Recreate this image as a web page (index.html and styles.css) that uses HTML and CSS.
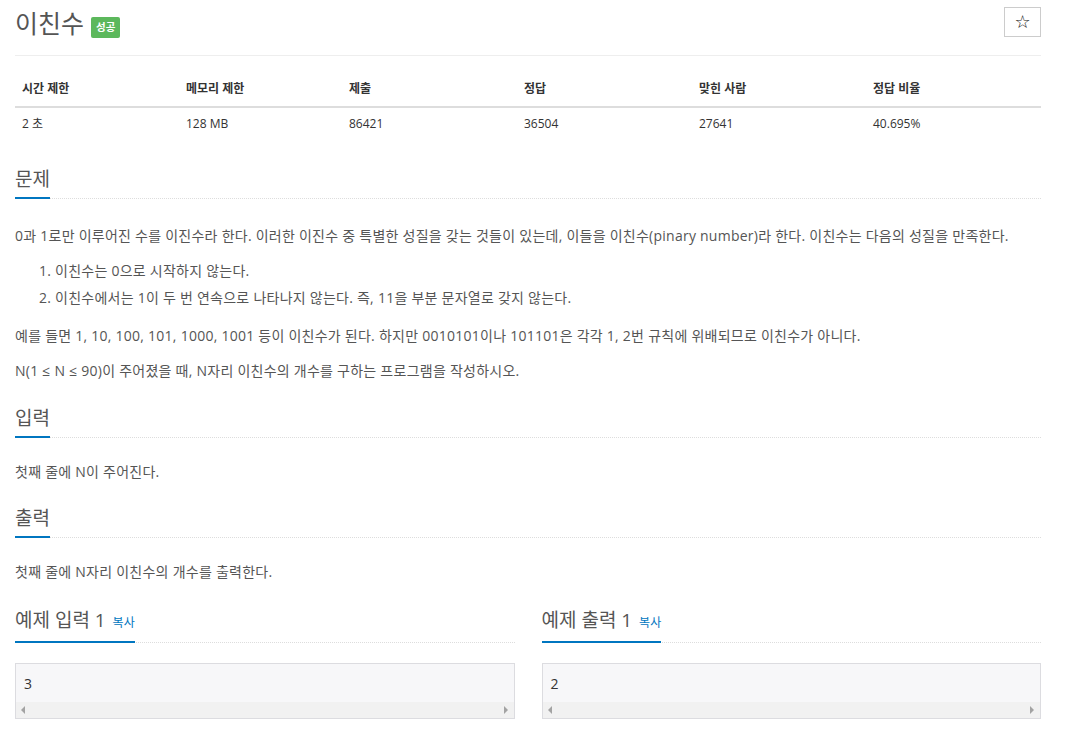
FILE: index.html
```html
<!DOCTYPE html>
<html lang="ko">
<head>
<meta charset="utf-8">
<title>이친수</title>
<link rel="stylesheet" href="styles.css">
</head>
<body>
<div class="page">
  <div class="page-header">
    <div class="title-group">
      <h1 class="title">이친수</h1>
      <span class="badge">성공</span>
    </div>
    <button class="star-btn">☆</button>
  </div>

  <table class="info">
    <colgroup>
      <col class="c1"><col class="c2"><col class="c3"><col class="c4"><col class="c5"><col class="c6">
    </colgroup>
    <thead>
      <tr>
        <th>시간 제한</th>
        <th>메모리 제한</th>
        <th>제출</th>
        <th>정답</th>
        <th>맞힌 사람</th>
        <th>정답 비율</th>
      </tr>
    </thead>
    <tbody>
      <tr>
        <td>2 초</td>
        <td>128 MB</td>
        <td>86421</td>
        <td>36504</td>
        <td>27641</td>
        <td>40.695%</td>
      </tr>
    </tbody>
  </table>

  <section class="sec sec-first">
    <div class="sec-head"><h2>문제</h2></div>
    <div class="sec-body">
      <p>0과 1로만 이루어진 수를 이진수라 한다. 이러한 이진수 중 특별한 성질을 갖는 것들이 있는데, 이들을 이친수(pinary number)라 한다. 이친수는 다음의 성질을 만족한다.</p>
      <ol>
        <li>이친수는 0으로 시작하지 않는다.</li>
        <li>이친수에서는 1이 두 번 연속으로 나타나지 않는다. 즉, 11을 부분 문자열로 갖지 않는다.</li>
      </ol>
      <p>예를 들면 1, 10, 100, 101, 1000, 1001 등이 이친수가 된다. 하지만 0010101이나 101101은 각각 1, 2번 규칙에 위배되므로 이친수가 아니다.</p>
      <p>N(1 ≤ N ≤ 90)이 주어졌을 때, N자리 이친수의 개수를 구하는 프로그램을 작성하시오.</p>
    </div>
  </section>

  <section class="sec">
    <div class="sec-head"><h2>입력</h2></div>
    <div class="sec-body">
      <p>첫째 줄에 N이 주어진다.</p>
    </div>
  </section>

  <section class="sec">
    <div class="sec-head"><h2>출력</h2></div>
    <div class="sec-body">
      <p>첫째 줄에 N자리 이친수의 개수를 출력한다.</p>
    </div>
  </section>

  <div class="examples">
    <section class="example">
      <div class="sec-head"><h2>예제 입력 1 <a class="copy">복사</a></h2></div>
      <div class="sample">
        <pre class="sample-data">3</pre>
        <div class="hscroll"><span class="arr arr-l"></span><span class="arr arr-r"></span></div>
      </div>
    </section>
    <section class="example">
      <div class="sec-head"><h2>예제 출력 1 <a class="copy">복사</a></h2></div>
      <div class="sample">
        <pre class="sample-data">2</pre>
        <div class="hscroll"><span class="arr arr-l"></span><span class="arr arr-r"></span></div>
      </div>
    </section>
  </div>
</div>
</body>
</html>
```

FILE: styles.css
```css
html, body {
  margin: 0;
  padding: 0;
  background: #fff;
}
body {
  font-family: "Open Sans", "Noto Sans CJK KR", sans-serif;
  color: #555;
  font-size: 14px;
}
.page {
  width: 1026px;
  margin-left: 15px;
}

/* header */
.page-header {
  display: flex;
  justify-content: space-between;
  align-items: flex-start;
  padding-top: 7px;
  height: 48px;
  border-bottom: 1px solid #eee;
}
.title-group {
  display: flex;
  align-items: flex-start;
}
.title {
  margin: 0;
  font-size: 25px;
  line-height: 32px;
  font-weight: 400;
  color: #555;
}
.badge {
  margin-top: 10px;
  margin-left: 7px;
  height: 21px;
  line-height: 21px;
  padding: 0 5px;
  background: #5cb85c;
  color: #fff;
  font-size: 10.5px;
  font-weight: 700;
  border-radius: 2px;
}
.star-btn {
  width: 37px;
  height: 30px;
  border: 1px solid #ccc;
  background: #fff;
  padding: 0;
  font-family: "DejaVu Sans", sans-serif;
  font-size: 18px;
  color: #111;
  line-height: 28px;
  text-align: center;
}

/* table */
.info {
  width: 100%;
  table-layout: fixed;
  border-collapse: collapse;
  margin-top: 16px;
  font-size: 12px;
  color: #333;
}
.info th, .info td {
  text-align: left;
  padding: 8px 7px;
  line-height: 18px;
}
.info th {
  font-weight: 700;
  border-bottom: 2px solid #ddd;
}
.info td {
  padding-top: 7px;
  padding-bottom: 7px;
}
.c1 { width: 164px; }
.c2 { width: 163px; }
.c3 { width: 175px; }
.c4 { width: 175px; }
.c5 { width: 174px; }
.c6 { width: 175px; }

/* sections */
.sec-head {
  border-bottom: 1px dotted #ddd;
  margin-top: 22.5px;
}
.sec-first .sec-head {
  margin-top: 25px;
}
.sec-head h2 {
  display: inline-block;
  margin: 0 0 -1px 0;
  padding-bottom: 4px;
  font-size: 19px;
  line-height: 28px;
  font-weight: 400;
  color: #555;
  border-bottom: 2px solid #0076c0;
}
.sec-body {
  padding-top: 23px;
}
.sec-first .sec-body {
  padding-top: 26px;
}
.sec-body p {
  margin: 0 0 14px 0;
  line-height: 21px;
  letter-spacing: 0.25px;
}
.sec-body ol {
  margin: 0 0 17px 0;
  padding-left: 40px;
}
.sec-body li {
  line-height: 21px;
  margin-bottom: 6px;
  letter-spacing: 0.25px;
}
.sec-body li:last-child {
  margin-bottom: 0;
}

/* examples */
.examples {
  display: grid;
  grid-template-columns: 1fr 1fr;
  column-gap: 27px;
}
.example .sec-head {
  margin-top: 10px;
}
.copy {
  font-size: 12px;
  color: #0076c0;
  margin-left: 2px;
}
.sample {
  margin-top: 20px;
  border: 1px solid #dcdce0;
  background: #f7f7f9;
}
.sample-data {
  margin: 0;
  padding: 10px 8px 8px;
  font-family: "Open Sans", sans-serif;
  font-size: 14px;
  line-height: 20px;
  color: #333;
}
.hscroll {
  position: relative;
  height: 16px;
  background: #f1f1f1;
}
.arr {
  position: absolute;
  top: 4px;
  width: 0;
  height: 0;
  border-top: 4px solid transparent;
  border-bottom: 4px solid transparent;
}
.arr-l {
  left: 5px;
  border-right: 4px solid #a3a3a3;
}
.arr-r {
  right: 6px;
  border-left: 4px solid #a3a3a3;
}
```
